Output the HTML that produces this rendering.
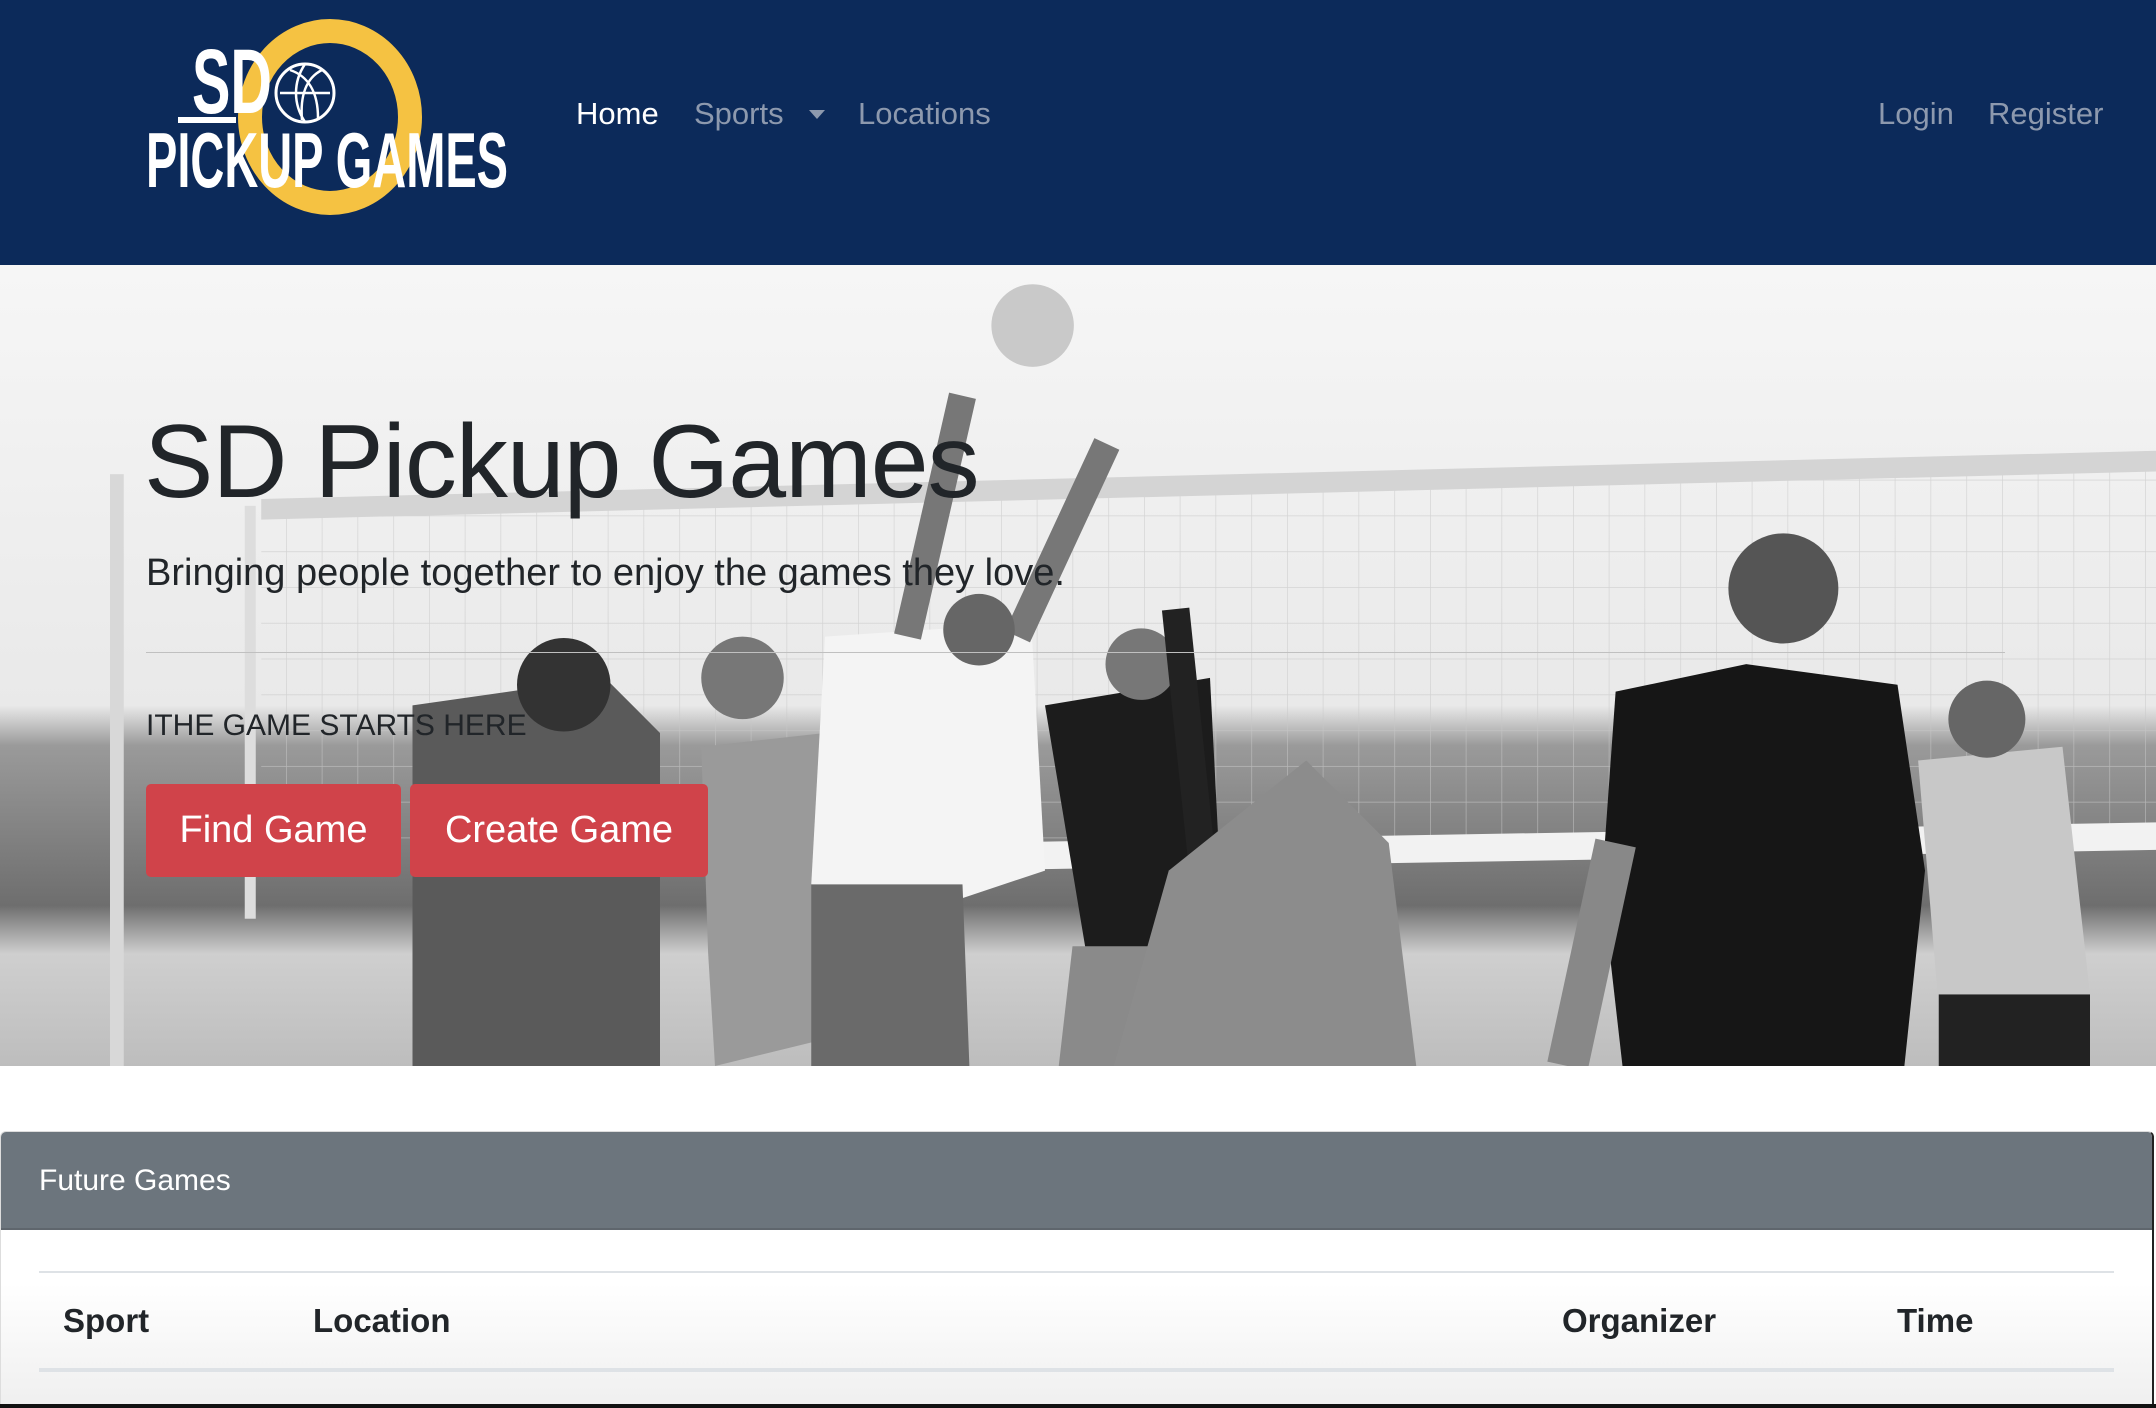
<!DOCTYPE html>
<html><head><meta charset="utf-8"><style>
*{margin:0;padding:0;box-sizing:border-box}
body{width:2156px;height:1408px;overflow:hidden;background:#fff;font-family:"Liberation Sans",sans-serif;position:relative}
.nav{position:absolute;left:0;top:0;width:2156px;height:265px;background:#0c2a5a}
.nl{position:absolute;top:96px;font-size:31px;color:#8d99ae}
.hero{position:absolute;left:0;top:265px;width:2156px;height:801px;overflow:hidden;background:#eee}
.t{position:absolute;color:#212529}
.btn{position:absolute;top:784px;height:93px;background:#d0434a;color:#fff;font-size:38px;border-radius:5px;line-height:93px;text-align:center}
</style></head><body>
<div class="nav">
<svg style="position:absolute;left:140px;top:15px" width="380" height="200" viewBox="0 0 380 200">
<ellipse cx="190" cy="102" rx="80" ry="86" fill="none" stroke="#f5c242" stroke-width="24"/>
<circle cx="165" cy="78" r="29" fill="none" stroke="#fff" stroke-width="3"/>
<path d="M140 78h50M165 49c-12 18-12 40 0 58M150 55c18 6 28 22 28 48M182 55c-16 8-22 26-20 50" stroke="#fff" stroke-width="2.5" fill="none"/>
<rect x="38" y="102" width="58" height="6" fill="#fff"/>
<text x="52" y="98" font-family="Liberation Sans Narrow,Liberation Sans,sans-serif" font-size="92" font-weight="bold" fill="#fff" textLength="80" lengthAdjust="spacingAndGlyphs">SD</text>
<text x="6" y="172" font-family="Liberation Sans Narrow,Liberation Sans,sans-serif" font-size="78" font-weight="bold" fill="#fff" textLength="362" lengthAdjust="spacingAndGlyphs">PICKUP GAMES</text>
</svg>
<div class="nl" style="left:576px;color:#fff">Home</div>
<div class="nl" style="left:694px">Sports</div>
<div style="position:absolute;left:809px;top:110px;border-left:8px solid transparent;border-right:8px solid transparent;border-top:9px solid #8d99ae"></div>
<div class="nl" style="left:858px">Locations</div>
<div class="nl" style="left:1878px">Login</div>
<div class="nl" style="left:1988px">Register</div>
</div>
<div class="hero">
<svg width="2156" height="801" viewBox="0 0 1568 582" preserveAspectRatio="none" style="position:absolute;left:0;top:0">
<defs><linearGradient id="sky" x1="0" y1="0" x2="0" y2="1">
<stop offset="0" stop-color="#f6f6f6"/><stop offset="0.55" stop-color="#e9e9e9"/><stop offset="0.6" stop-color="#9a9a9a"/><stop offset="0.8" stop-color="#6e6e6e"/><stop offset="0.86" stop-color="#cfcfcf"/><stop offset="1" stop-color="#bdbdbd"/></linearGradient>
<pattern id="net" width="26" height="26" patternUnits="userSpaceOnUse"><path d="M0 0H26M0 0V26" stroke="#c8c8c8" stroke-width="1"/></pattern></defs>
<rect width="1568" height="582" fill="url(#sky)"/>
<polygon points="190,175 1568,140 1568,420 190,440" fill="url(#net)" opacity="0.7"/>
<polygon points="190,170 1568,135 1568,150 190,185" fill="#d4d4d4"/>
<polygon points="700,420 1568,405 1568,425 700,440" fill="#f2f2f2"/>
<rect x="80" y="152" width="10" height="430" fill="#d8d8d8"/>
<rect x="178" y="175" width="8" height="300" fill="#ddd"/>
<circle cx="751" cy="44" r="30" fill="#c9c9c9"/>
<polygon points="300,320 440,300 480,340 480,582 300,582" fill="#5a5a5a"/>
<circle cx="410" cy="305" r="34" fill="#333"/>
<polygon points="510,350 600,340 610,560 520,582 515,500" fill="#9a9a9a"/>
<circle cx="540" cy="300" r="30" fill="#777"/>
<polygon points="600,270 750,260 760,440 700,460 590,450" fill="#f4f4f4"/>
<polygon points="590,450 700,450 705,582 590,582" fill="#6a6a6a"/>
<path d="M660 270 L700 95 M740 270 L805 130" stroke="#777" stroke-width="20"/>
<circle cx="712" cy="265" r="26" fill="#666"/>
<polygon points="760,320 880,300 890,495 790,500" fill="#1c1c1c"/>
<polygon points="780,495 870,495 860,582 770,582" fill="#8a8a8a"/>
<circle cx="830" cy="290" r="26" fill="#777"/>
<path d="M855 250 L880 490" stroke="#222" stroke-width="20"/>
<polygon points="850,440 950,360 1010,420 1030,582 810,582" fill="#8c8c8c"/>
<polygon points="1175,310 1270,290 1380,305 1400,440 1385,582 1180,582 1165,450" fill="#161616"/>
<circle cx="1297" cy="235" r="40" fill="#555"/>
<path d="M1175 420 L1140 582" stroke="#888" stroke-width="30"/>
<polygon points="1395,360 1500,350 1520,530 1410,540" fill="#c8c8c8"/>
<circle cx="1445" cy="330" r="28" fill="#666"/>
<rect x="1410" y="530" width="110" height="52" fill="#222"/>
</svg>
<div class="t" style="left:144px;top:138px;font-size:104px;font-weight:300;letter-spacing:-1px">SD Pickup Games</div>
<div class="t" style="left:146px;top:287px;font-size:38px">Bringing people together to enjoy the games they love.</div>
<div style="position:absolute;left:146px;top:387px;width:1859px;height:1px;background:#c0c0c0"></div>
<div class="t" style="left:146px;top:444px;font-size:30px">ITHE GAME STARTS HERE</div>
</div>
<div class="btn" style="left:146px;width:255px">Find Game</div>
<div class="btn" style="left:410px;width:298px">Create Game</div>
<div style="position:absolute;left:0;top:1131px;width:2154px;height:277px;border:1px solid #ddd;border-right:2px solid #222;border-radius:6px 6px 0 0;overflow:hidden;background:linear-gradient(#fff 55%,#efefef)">
<div style="height:98px;background:#6c757d;color:#fff;font-size:30px;padding:32px 38px;border-bottom:2px solid #5f666d">Future Games</div>
<div style="position:absolute;left:38px;top:139px;width:2075px;height:2px;background:#dee2e6"></div>
<div style="position:absolute;left:38px;top:236px;width:2075px;height:4px;background:#dee2e6"></div>
<div style="position:absolute;top:170px;left:0;width:100%;font-size:33px;font-weight:bold;color:#212529">
<span style="position:absolute;left:62px">Sport</span><span style="position:absolute;left:312px">Location</span><span style="position:absolute;left:1561px">Organizer</span><span style="position:absolute;left:1896px">Time</span></div>
</div>
<div style="position:absolute;left:0;top:1404px;width:2156px;height:4px;background:#111"></div>
</body></html>
